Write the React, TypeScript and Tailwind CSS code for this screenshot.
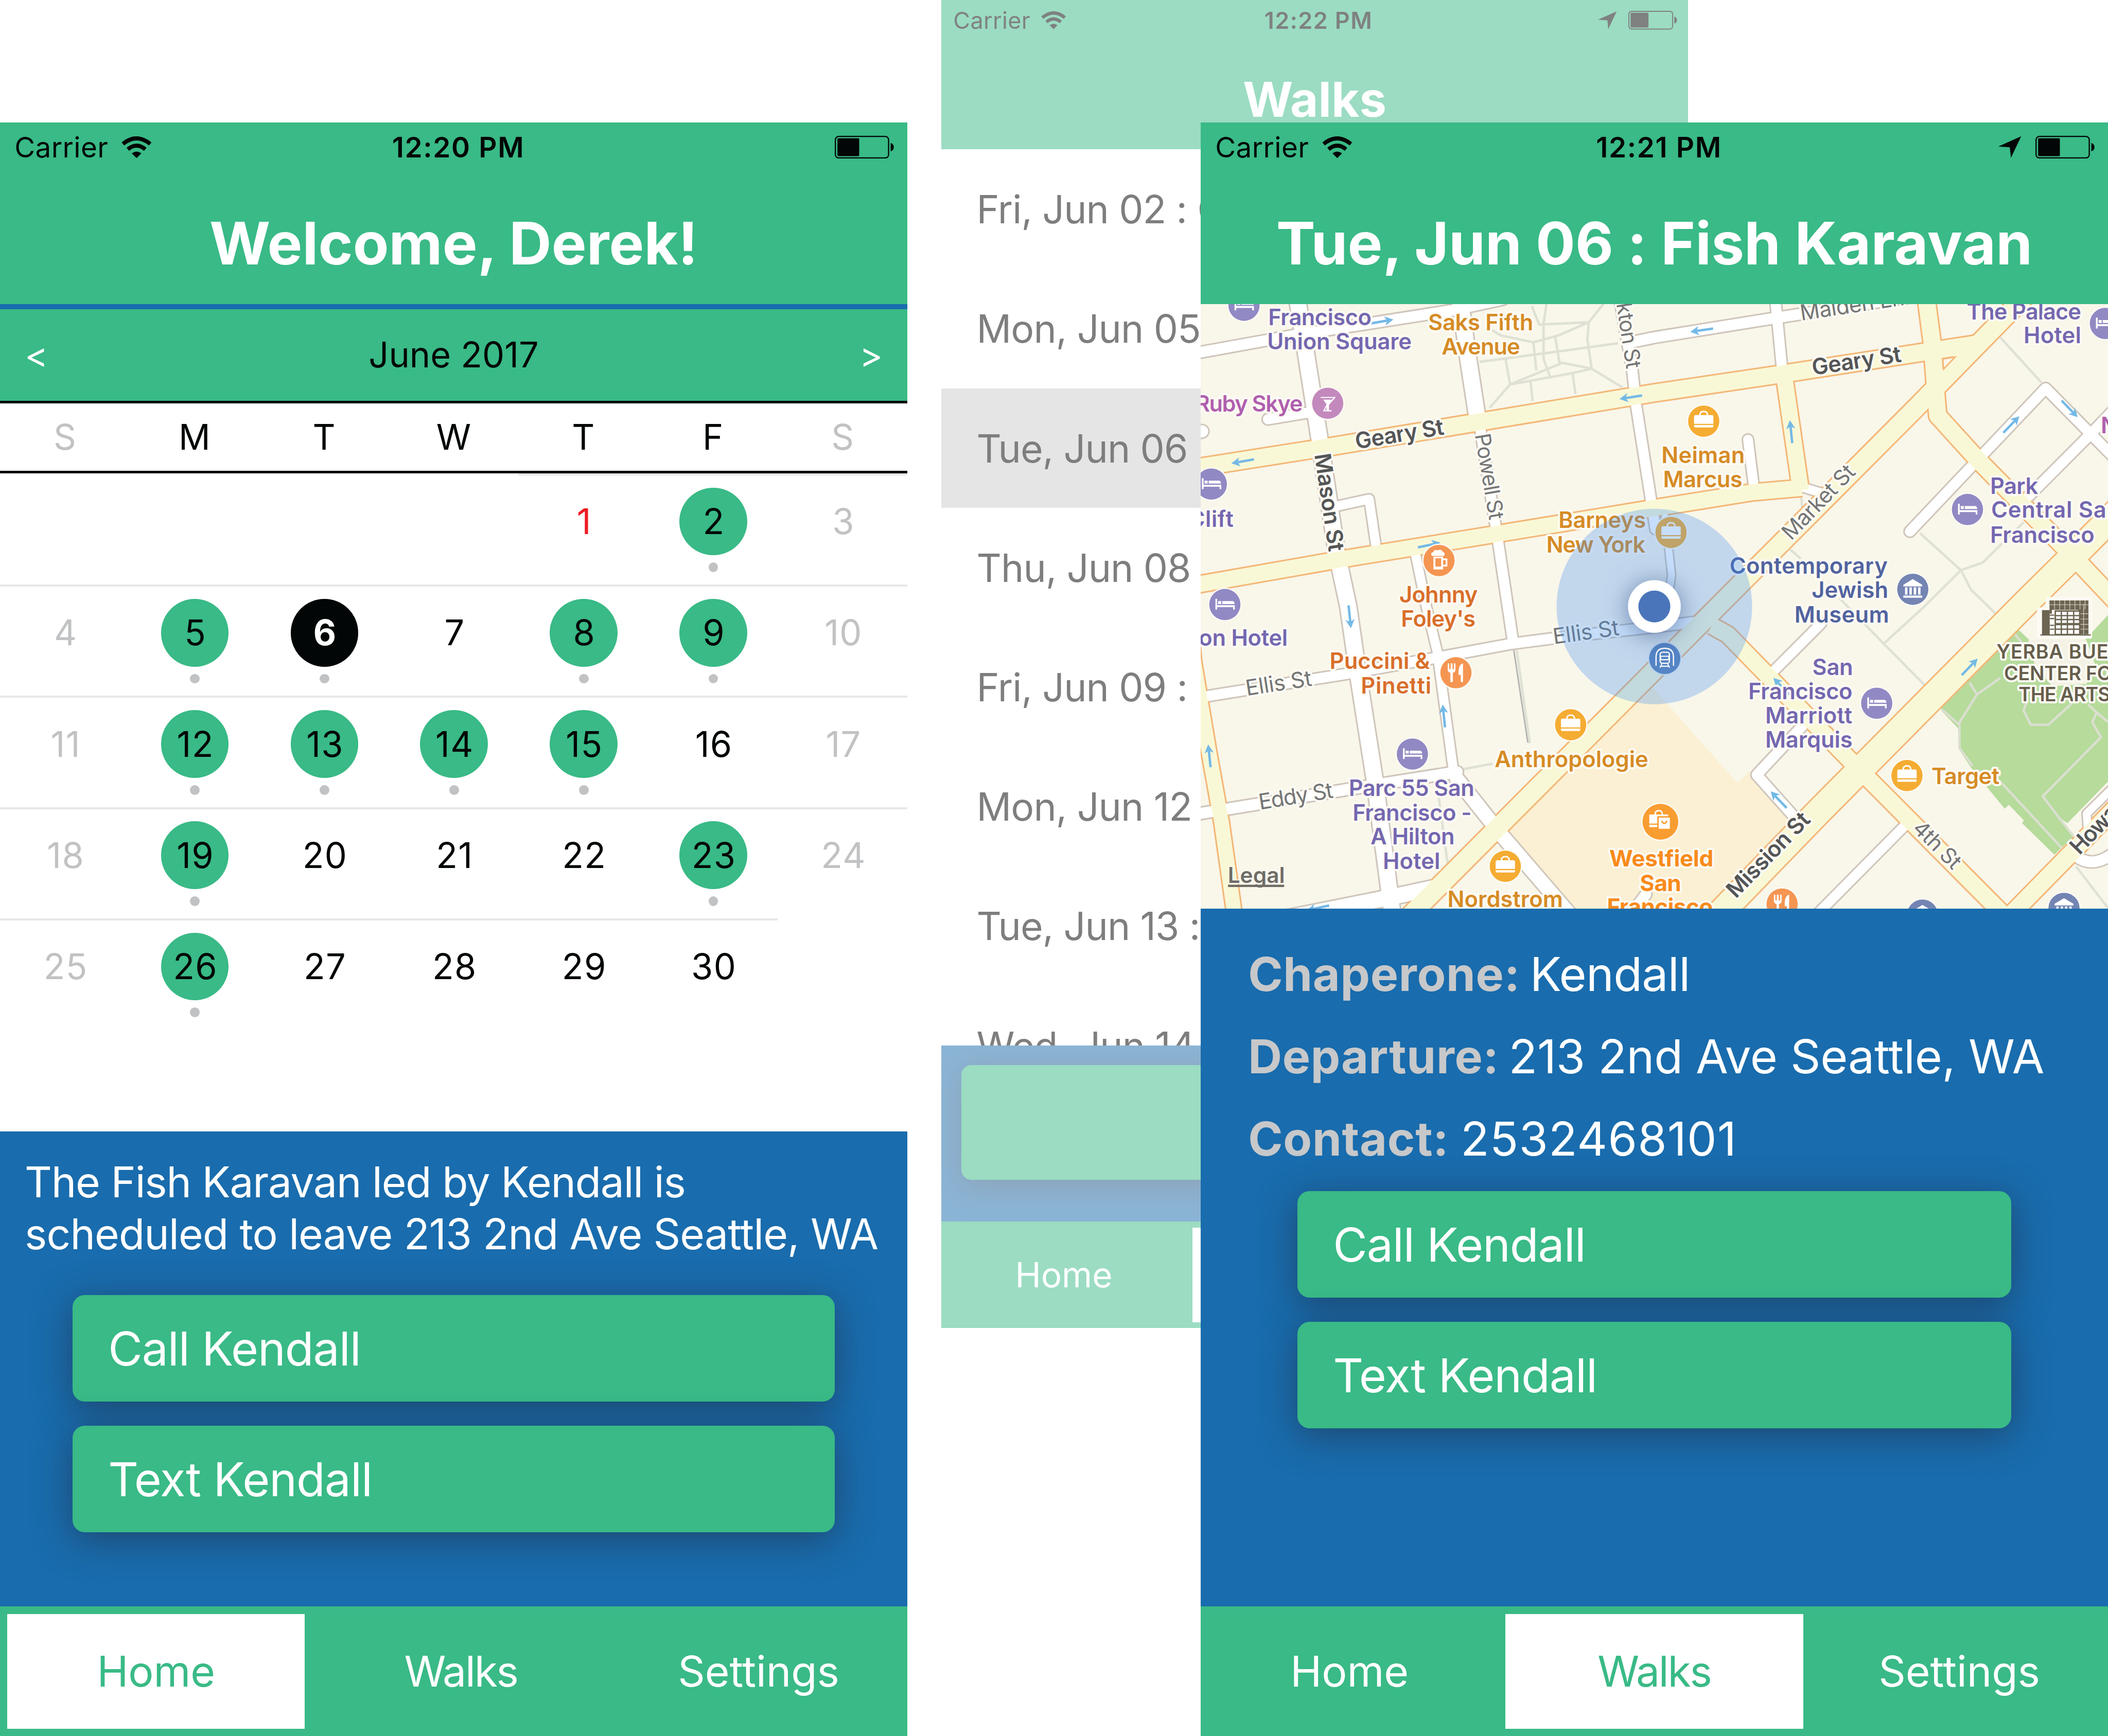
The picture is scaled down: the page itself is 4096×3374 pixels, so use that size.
import React from "react";
import type { ReactNode } from "react";

/* ---------- Status bar ---------- */

function WifiIcon() {
  return (
    <svg viewBox="0 0 12.5 9" className="h-[9px] w-[12.5px]" fill="none" stroke="currentColor" strokeWidth="1.65">
      <path d="M0.6 3.15 Q6.25 -1.5 11.9 3.15" />
      <path d="M2.65 5.35 Q6.25 2.35 9.85 5.35" />
      <path d="M6.25 9 L4.25 7 Q6.25 5.5 8.25 7 Z" fill="currentColor" stroke="none" />
    </svg>
  );
}

function LocationIcon() {
  return (
    <svg viewBox="0 0 9.4 8.9" className="mr-[5.9px] h-[8.9px] w-[9.4px]" fill="currentColor">
      <path d="M9.4 0 L0 4.2 L4.7 4.5 L5.2 8.9 Z" />
    </svg>
  );
}

function BatteryIcon() {
  return (
    <svg viewBox="0 0 24.5 9.4" className="h-[9.4px] w-[24.5px]" fill="none">
      <rect x="0.25" y="0.25" width="22" height="8.9" rx="1.4" stroke="currentColor" strokeWidth="0.5" />
      <rect x="1.1" y="1" width="9" height="7.4" rx="0.4" fill="currentColor" />
      <path d="M23.1 3 Q24.4 3.3 24.4 4.7 Q24.4 6.1 23.1 6.4 Z" fill="currentColor" />
    </svg>
  );
}

function StatusBar({ time, located }: { time: string; located?: boolean }) {
  return (
    <div className="grid h-5 grid-cols-3 items-center pt-[0.4px] text-[11.64px] text-[#020606]">
      <div className="flex items-center gap-[5.4px] pl-[6px] tracking-[0.007em]">
        Carrier
        <WifiIcon />
      </div>
      <div className="pl-[3.8px] text-center font-semibold tracking-[0.03em] whitespace-nowrap">{time}</div>
      <div className="flex items-center justify-end pr-[5.5px]">
        {located && <LocationIcon />}
        <BatteryIcon />
      </div>
    </div>
  );
}

function Header({ time, located, title }: { time: string; located?: boolean; title: string }) {
  return (
    <div className="h-[75px] shrink-0 bg-[#39ba86]">
      <StatusBar time={time} located={located} />
      <h1 className="flex h-[55px] items-center justify-center pt-[5.1px] text-[24.25px] font-bold tracking-[0.0005em] whitespace-nowrap text-white">
        {title}
      </h1>
    </div>
  );
}

/* ---------- Shared pieces ---------- */

const tabNames = ["Home", "Walks", "Settings"] as const;

function TabBar({ active }: { active: (typeof tabNames)[number] }) {
  return (
    <div className="flex h-[53.5px] shrink-0 bg-[#39ba86] text-[17.46px]">
      {tabNames.map((name) => (
        <div
          key={name}
          className={
            "flex flex-1 items-center justify-center " +
            (name === "Walks" ? "tracking-[-0.026em] " : "tracking-[-0.001em] ") +
            (name === active ? "m-[3px] bg-white text-[#39ba86]" : "text-white")
          }
        >
          {name}
        </div>
      ))}
    </div>
  );
}

function ActionButton({ children }: { children?: ReactNode }) {
  return (
    <div className="flex h-11 items-center rounded-[5px] bg-[#39ba86] pt-[0.3px] pl-[14.7px] text-[19.4px] tracking-[-0.012em] text-white shadow-[0_3px_15px_rgba(36,36,50,0.5)]">
      {children}
    </div>
  );
}

function Phone({ children }: { children: ReactNode }) {
  return (
    <div className="flex h-[667px] w-[375px] flex-col overflow-hidden bg-white font-['Inter',sans-serif]">{children}</div>
  );
}

/* ---------- Home screen ---------- */

const weekdays = ["S", "M", "T", "W", "T", "F", "S"];
const walkDays = [2, 5, 6, 8, 9, 12, 13, 14, 15, 19, 23, 26];
const today = 1;
const selectedDay = 6;
const firstColumn = 4;

function dayColor(day: number, column: number) {
  if (day === selectedDay) return "bg-[#020606] font-bold text-white";
  if (day === today) return "text-[#ed1c24]";
  if (walkDays.includes(day)) return "bg-[#39ba86] text-[#020606]";
  return column === 0 || column === 6 ? "text-[#c1c2c4]" : "text-[#020606]";
}

function DayCell({ day, column }: { day: number; column: number }) {
  return (
    <div className="flex h-[46px] flex-col items-center border-t border-[#e6e7e8] pt-[5.1px] pl-[0.3px]">
      <div
        className={
          "flex size-7 shrink-0 items-center justify-center rounded-full pl-[0.5px] text-[14.55px] tracking-[0.02em] " +
          dayColor(day, column)
        }
      >
        {day}
      </div>
      {walkDays.includes(day) && <div className="mt-[3px] size-1 rounded-full bg-[#c1c2c4]" />}
    </div>
  );
}

function Calendar() {
  const days = Array.from({ length: 30 }, (_, i) => i + 1);
  return (
    <div className="h-[342px] shrink-0">
      <div className="flex h-[40px] items-center justify-between border-t-[2.14px] border-[#196cad] bg-[#39ba86] px-[10.2px] text-[14.55px] text-white">
        <span>&lt;</span>
        <span className="text-[#020606]">June 2017</span>
        <span>&gt;</span>
      </div>
      <div className="grid h-[30px] grid-cols-7 items-center border-y-[1.07px] border-[#020606] text-center text-[14.55px] text-[#020606]">
        {weekdays.map((d, i) => (
          <span key={i} className={i === 0 || i === 6 ? "text-[#c1c2c4]" : undefined}>
            {d}
          </span>
        ))}
      </div>
      <div className="grid grid-cols-7">
        {Array.from({ length: firstColumn }, (_, i) => (
          <div key={"blank" + i} />
        ))}
        {days.map((day) => (
          <DayCell key={day} day={day} column={(day - 1 + firstColumn) % 7} />
        ))}
      </div>
    </div>
  );
}

function HomeScreen() {
  return (
    <Phone>
      <Header time="12:20 PM" title="Welcome, Derek!" />
      <Calendar />
      <div className="flex-1 bg-[#196cad] pt-[10.2px]">
        <p className="pl-[10.2px] text-[17.46px] leading-[21.5px] whitespace-nowrap text-white">
          <span className="tracking-[-0.0151em]">The Fish Karavan led by Kendall is</span>
          <br />
          <span className="tracking-[-0.0109em]">scheduled to leave 213 2nd Ave Seattle, WA</span>
        </p>
        <div className="mt-[14.6px] flex flex-col gap-2.5 px-[30px]">
          <ActionButton>Call Kendall</ActionButton>
          <ActionButton>Text Kendall</ActionButton>
        </div>
      </div>
      <TabBar active="Home" />
    </Phone>
  );
}

/* ---------- Walk list screen ---------- */

const walks = [
  "Fri, Jun 02 : C",
  "Mon, Jun 05",
  "Tue, Jun 06",
  "Thu, Jun 08",
  "Fri, Jun 09 :",
  "Mon, Jun 12",
  "Tue, Jun 13 :",
  "Wed, Jun 14",
];

function WalksScreen() {
  return (
    <Phone>
      <Header time="12:22 PM" located title="Walks" />
      <div className="h-[450px] shrink-0 overflow-hidden">
        {walks.map((walk, i) => (
          <div
            key={walk}
            className={
              "flex h-[60px] items-center pt-[0.6px] pl-[17.7px] text-[19.4px] tracking-[-0.0125em] whitespace-nowrap text-black " +
              (i === 2 ? "bg-[#cdcdcd]" : "")
            }
          >
            {walk}
          </div>
        ))}
      </div>
      <div className="flex-1 overflow-hidden bg-[#196cad] p-2.5">
        <div className="h-[57.4px] rounded-[5px] bg-[#39ba86] shadow-[0_3px_15px_rgba(36,36,50,0.5)]" />
      </div>
      <TabBar active="Walks" />
    </Phone>
  );
}

/* ---------- Map ---------- */

const tone = {
  hotel: "#7467b0",
  shop: "#d68b25",
  food: "#d96e2a",
  club: "#b05fae",
  museum: "#51639f",
  mall: "#f98b1c",
  arts: "#665e4c",
};

const whiteRoads: { d: string; w: number }[] = [
  { d: "M-4 20.6 L0 19.9 L38 13 L104.4 2.5 L125 -2", w: 5 },
  { d: "M177.8 15.8 L187 13.9 L235.2 6.1 L294 -3", w: 5 },
  { d: "M39.8 -3 L43.9 22.7 L49 55 L56.2 102.7 L61 125 L65.2 154 L71.9 196.6 L79.5 254", w: 7.2 },
  { d: "M107 -3 L110.6 22.7 L114.2 46", w: 7.2 },
  { d: "M115 48 L123.1 99.5 L129 139", w: 4.8 },
  { d: "M173 -3 L178.4 27.5 L180 42.1 L188 93", w: 4.8 },
  { d: "M237.4 -3 L240.3 27", w: 4.8 },
  { d: "M226.2 56 L228.8 77", w: 4.6 },
  { d: "M27.8 47.6 L47 44.4", w: 4.8 },
  { d: "M-4 53.4 L0.6 52.6", w: 5.6 },
  { d: "M55 83.8 L69.6 80.6 L72.6 101", w: 4.4 },
  { d: "M88.5 102 L93 124 L97.7 143.4 L104.6 194 L107 198.5 L124.6 219.8 L156 256", w: 4.4 },
  { d: "M106 196.4 L124.6 219.8 L154 254", w: 6.4 },
  { d: "M3 162 L62 152.6 L98.4 146 L128.5 140.4 L150 137.6 L187 133.6 L206 131.2", w: 4.8 },
  { d: "M-4 211.2 L70.7 199 L106 193.4", w: 5.2 },
  { d: "M34.5 254 L78.5 245.2 L96 241.4", w: 7 },
  { d: "M192 88 L194.6 112 L192 131", w: 3.4 },
  { d: "M293.1 94 L349.2 34.8 L380 66", w: 4.8 },
  { d: "M380 41 L368.5 53 L342 79.6", w: 4.8 },
  { d: "M256.4 132 L236 152.5", w: 4.6 },
  { d: "M250 173 L229.8 194.6 L248 215", w: 4.8 },
  { d: "M291.6 215 L254 253", w: 4.6 },
  { d: "M380 197 L366.2 210.6 L366.8 221", w: 3.8 },
  { d: "M362 228.4 Q369 233.6 378 226.4", w: 5 },
  { d: "M249 75.8 L257 78.2", w: 4.2 },
  { d: "M178 252 L184 244", w: 5 },
];

const yellowRoads: { d: string; w: number }[] = [
  { d: "M-4 68 L55.6 58.6 L187 36.8 L237.6 29.3 L298 20 L320 16.6", w: 7.6 },
  { d: "M-4 116.6 L0 115.7 L58.6 105.4 L123.6 94.8 L188.8 84.1 L228 77.8 L248.4 76", w: 7.2 },
  { d: "M241.2 30 L248 77", w: 7.2 },
  { d: "M299.8 -3 L302.3 16 L303.6 34 L304.6 46.1 L321.1 64.3 L360.6 104.3 L382 127", w: 7.6 },
  { d: "M340.5 -3 L295.6 42.9 L234.3 104.4 L85 254.3", w: 8.2 },
  { d: "M384 80.6 L360.4 104.3 L340.7 123.8 L255.5 209.7 L212.3 254.3", w: 11.2 },
  { d: "M211.2 133 L217.8 136.6 L269 189.2 L334 254.6", w: 7.4 },
  { d: "M333 254.3 L384 202.2", w: 7.6 },
  { d: "M-8 92 L-2.8 148 L3.4 185 L8.6 214 L14.2 254", w: 6.6 },
];

const footpaths =
  "M136.9 0.9 L139.9 8.5 L160.4 7.5 L166.4 0 M142.9 0 L141.7 8.1 L141.7 22.7 L144.7 30.8 M160.4 7.5 L159.8 14.6 L161.6 26.7 L174.2 34.4 M160.4 7.5 L147.7 13 L137.5 15.8 L124.2 13 L120 10.6 M115.2 23.9 L147.7 19.6 L172.4 16.2 M126 22.7 L127.9 33.2 L119.4 42.9 M127.9 33.2 L149.5 24.3 L161.6 26.7 L153.7 28.5 L127.9 33.2 M136.3 32 L137.2 40.1 M153.7 28.5 L154.9 37.2 M146.5 13.4 L148.3 24.3 M137.5 15.8 L138.7 27.5 M330.5 13.8 L347.4 32.4 M297.3 94.7 L314.2 110 L318.4 118.1 L329.3 128.7 M314.2 110 L323.3 106.8 L340.1 90.2 M314.2 110 L299.1 125 L282.3 140.4 M264 121.6 L282.3 140.4 L299.1 157.4 M243.7 101.5 L248 105.2 M130.6 143 L136 181.5 M107.4 192.5 L120.6 190 M98.4 203.9 L102 230.9 M361.8 232.5 L376 251 M248 77 L248.6 84";

const parkPaths =
  "M317.8 156.5 L320.8 161.4 L313.6 172.9 L313.6 183.5 L319 190.9 M320.8 161.4 L330.5 154.5 M341.3 164.7 L340.1 168 L343.1 173.9 L350.4 173.9 L360 165.1 M366.7 165.5 L370.3 168.8 L368.5 172.9 L372.1 179 L348 203.5 L360.6 219.9 M370.3 168.8 L376 173.6 M330.5 197.4 L355.8 224.8 M306.4 167.6 L313.6 174 M336.6 136.6 L343.5 145";

const arrows: [number, number, number][] = [
  [74.9, 7.2, -10],
  [17.4, 65, 170],
  [177.8, 38.5, 171],
  [94.4, 99.6, -12],
  [61.6, 129.2, 84],
  [100.5, 170.3, -96],
  [3.6, 186.8, -96],
  [48.5, 249.6, 168],
  [207.1, 10.8, 172],
  [244, 52.8, -96],
  [335, 49.8, -46],
  [359.1, 43.3, 46],
  [317.8, 150, -46],
  [238.9, 204.9, -134],
  [240, 158, -134],
];

function Arrow({ x, y, angle }: { x: number; y: number; angle: number }) {
  return (
    <g transform={`translate(${x} ${y}) rotate(${angle})`} stroke="#74b9e6" strokeWidth="1" fill="none">
      <path d="M-4.7 0 H3.4" />
      <path d="M4.8 0 L1.2 -1.9 L2.2 0 L1.2 1.9 Z" fill="#74b9e6" stroke="none" />
    </g>
  );
}

type PoiKind = "hotel" | "bag" | "fork" | "beer" | "martini" | "museum" | "mall" | "transit";

const poiColor: Record<PoiKind, string> = {
  hotel: "#9189c3",
  bag: "#f5ac32",
  fork: "#f59552",
  beer: "#f59552",
  martini: "#c389bd",
  museum: "#7484b3",
  mall: "#f99d31",
  transit: "#5585c5",
};

function PoiGlyph({ kind }: { kind: PoiKind }) {
  switch (kind) {
    case "hotel":
      return (
        <path
          d="M-3.9 -2.4 h0.7 v2.7 h7.3 v1.8 h-0.7 v-1 h-6.6 v1 h-0.7 z M-2.8 -1.4 h1.3 v1.2 h-1.3 z M-1.1 -1.4 h4.2 q0.9 0 0.9 1.2 h-5.1 z"
          fill="#fff"
        />
      );
    case "bag":
      return (
        <g fill="#fff">
          <path d="M-4 -1.9 q0 -0.6 0.6 -0.6 h6.8 q0.6 0 0.6 0.6 v3 h-8 z" />
          <path d="M-4 1.6 h8 v0.4 q0 0.6 -0.6 0.6 h-6.8 q-0.6 0 -0.6 -0.6 z" />
          <path d="M-1.6 -2.4 q0 -1.6 1.6 -1.6 q1.6 0 1.6 1.6" fill="none" stroke="#fff" strokeWidth="0.6" />
        </g>
      );
    case "fork":
      return (
        <g fill="#fff">
          <path d="M-3.4 -3.9 h0.6 v2.4 h0.6 v-2.4 h0.8 v2.4 h0.6 v-2.4 h0.6 v2.6 q0 1 -1.1 1.3 v3.8 h-1 v-3.8 q-1.1 -0.3 -1.1 -1.3 z" />
          <path d="M2.9 -3.9 v7.7 h-0.9 v-2.9 h-0.9 q-0.3 -4.2 1.8 -4.8 z" />
        </g>
      );
    case "beer":
      return (
        <g>
          <path d="M-2.9 -1.9 q-0.9 -1.2 0.5 -1.6 q0.4 -1.2 1.8 -0.7 q1.6 -0.7 2.1 0.6 q1.4 0.4 0.5 1.7 z" fill="#fff" />
          <rect x="-2.3" y="-1.6" width="4" height="5.3" fill="#fff" />
          <rect x="-1.5" y="-0.9" width="2.4" height="3.4" fill="#f59552" />
          <path d="M1.7 -0.5 h1.4 v2.6 h-1.4" fill="none" stroke="#fff" strokeWidth="0.7" />
        </g>
      );
    case "martini":
      return (
        <g fill="none" stroke="#fff" strokeWidth="0.45">
          <path d="M-2.9 -2.4 H2.9 L0.3 0.6 V3.1 H1.6 M-1.6 3.1 H-0.3 V0.6 Z" />
          <path d="M-1.9 -1.5 H1.9 L0.4 0.5 V3.3 H-0.4 V0.5 Z" fill="#fff" stroke="none" />
        </g>
      );
    case "museum":
      return (
        <g fill="#fff">
          <path d="M0 -4.2 L3.9 -1.9 v0.7 h-7.8 v-0.7 z" />
          <path d="M-3.2 -0.8 h1 v3 h-1 z M-1.4 -0.8 h1 v3 h-1 z M0.4 -0.8 h1 v3 h-1 z M2.2 -0.8 h1 v3 h-1 z M-3.9 2.6 h7.8 v0.9 h-7.8 z" />
        </g>
      );
    case "mall":
      return (
        <g fill="#fff">
          <path d="M-4.6 -3 h7.8 v5.2 h-7.8 z" />
          <path d="M-2.2 -3 q0 -1.6 1.5 -1.6 q1.5 0 1.5 1.6" fill="none" stroke="#fff" strokeWidth="0.6" />
          <path d="M-4.6 1 h4" stroke="#f99d31" strokeWidth="0.5" />
          <rect x="-1" y="-2" width="5.2" height="5.2" stroke="#f99d31" strokeWidth="0.6" />
          <path d="M0.5 -0.4 q1.1 2.2 2.2 0" fill="none" stroke="#f99d31" strokeWidth="0.6" />
        </g>
      );
    case "transit":
      return (
        <g fill="none" stroke="#fff">
          <path d="M-3.6 3 V-0.6 Q-3.6 -4.2 0 -4.2 Q3.6 -4.2 3.6 -0.6 V3" strokeWidth="0.5" />
          <rect x="-1.9" y="-2.6" width="3.8" height="4.6" rx="0.9" strokeWidth="0.5" />
          <path d="M-1.7 -0.9 h3.4 v1.4 h-3.4 z" strokeWidth="0.45" />
          <path d="M-1.2 2.2 L-2 3.8 M1.2 2.2 L2 3.8 M-1.6 3.2 h3.2" strokeWidth="0.45" />
        </g>
      );
  }
}

function Poi({ kind, x, y }: { kind: PoiKind; x: number; y: number }) {
  return (
    <g transform={`translate(${x} ${y})`}>
      <circle r={kind === "mall" ? 7.9 : 7} fill={kind === "transit" ? "#b9d2ee" : "#fdfcf6"} />
      <circle r={kind === "mall" ? 7.4 : 6.45} fill={poiColor[kind]} />
      <PoiGlyph kind={kind} />
    </g>
  );
}

const pois: [PoiKind, number, number][] = [
  ["hotel", 17.9, 0.5],
  ["martini", 52.5, 41],
  ["hotel", 4.4, 74.4],
  ["hotel", 10, 124.2],
  ["beer", 98.5, 106],
  ["fork", 105.5, 152.4],
  ["hotel", 87.5, 186],
  ["bag", 152.9, 173.9],
  ["bag", 125.9, 232.4],
  ["bag", 207.9, 48.4],
  ["bag", 194.4, 94.4],
  ["museum", 294.3, 117.9],
  ["hotel", 316.9, 84.9],
  ["hotel", 373.9, 8],
  ["hotel", 279.4, 165],
  ["bag", 291.9, 194.9],
  ["mall", 190, 214],
  ["fork", 240.3, 248],
  ["museum", 298.3, 252.6],
  ["museum", 356.8, 249.8],
];

interface Label {
  t: string;
  x: number;
  y: number;
  w: number;
  c: string;
  a?: number;
  s?: number;
  b?: number;
}

const labels: Label[] = [
  { t: "Francisco", x: 27.9, y: 8.8, w: 42.7, c: tone.hotel },
  { t: "Union Square", x: 27.5, y: 18.65, w: 59.7, c: tone.hotel },
  { t: "Ruby Skye", x: -2.2, y: 44.4, w: 44.4, c: tone.club },
  { t: "Clift", x: -5, y: 92, w: 18.6, c: tone.hotel },
  { t: "Saks Fifth", x: 94, y: 10.8, w: 43.5, c: tone.shop },
  { t: "Avenue", x: 99.6, y: 20.8, w: 32.4, c: tone.shop },
  { t: "Barneys", x: 147.9, y: 92.6, w: 36.1, c: tone.shop },
  { t: "New York", x: 142.9, y: 102.7, w: 40.9, c: tone.shop },
  { t: "Johnny", x: 82.1, y: 123.4, w: 32.4, c: tone.food },
  { t: "Foley's", x: 82.8, y: 133.4, w: 30.8, c: tone.food },
  { t: "on Hotel", x: -0.8, y: 141.2, w: 36.8, c: tone.hotel },
  { t: "Puccini &", x: 53.3, y: 150.8, w: 41.4, c: tone.food },
  { t: "Pinetti", x: 66.2, y: 161, w: 29.1, c: tone.food },
  { t: "Parc 55 San", x: 61.2, y: 203.4, w: 51.9, c: tone.hotel },
  { t: "Francisco -", x: 62.8, y: 213.5, w: 49.2, c: tone.hotel },
  { t: "A Hilton", x: 70.2, y: 223.4, w: 34.8, c: tone.hotel },
  { t: "Hotel", x: 75.3, y: 233.5, w: 23.7, c: tone.hotel },
  { t: "Anthropologie", x: 121.5, y: 191.4, w: 63.5, c: tone.shop },
  { t: "Nordstrom", x: 102, y: 249.3, w: 47.7, c: tone.shop },
  { t: "Westfield", x: 168.9, y: 232.5, w: 43, c: tone.mall, b: 700, s: 9.4 },
  { t: "San", x: 181.5, y: 242.6, w: 17.1, c: tone.mall, b: 700, s: 9.4 },
  { t: "Francisco", x: 167.9, y: 252.5, w: 43.8, c: tone.mall, b: 700, s: 9.4 },
  { t: "Neiman", x: 190.4, y: 65.8, w: 34.5, c: tone.shop },
  { t: "Marcus", x: 191.1, y: 75.8, w: 32.8, c: tone.shop },
  { t: "The Palace", x: 316.6, y: 6.3, w: 47.3, c: tone.hotel },
  { t: "Hotel", x: 340.1, y: 16.2, w: 23.8, c: tone.hotel },
  { t: "Park", x: 326.3, y: 78.5, w: 19.8, c: tone.hotel },
  { t: "Central San", x: 326.7, y: 88.3, w: 53.4, c: tone.hotel },
  { t: "Francisco", x: 326.3, y: 98.7, w: 43.1, c: tone.hotel },
  { t: "N", x: 372, y: 53.4, w: 6.9, c: tone.club },
  { t: "Contemporary", x: 218.6, y: 111.4, w: 65.3, c: tone.museum },
  { t: "Jewish", x: 252.5, y: 121.5, w: 31.7, c: tone.museum },
  { t: "Museum", x: 245.4, y: 131.6, w: 39.1, c: tone.museum },
  { t: "San", x: 252.8, y: 153.3, w: 16.8, c: tone.hotel },
  { t: "Francisco", x: 226.3, y: 163.3, w: 43.1, c: tone.hotel },
  { t: "Marriott", x: 233.3, y: 173.3, w: 36, c: tone.hotel },
  { t: "Marquis", x: 233.3, y: 183.3, w: 36.1, c: tone.hotel },
  { t: "Target", x: 302, y: 198.4, w: 28.1, c: tone.shop },
  { t: "YERBA BUENA", x: 328.9, y: 146.5, w: 58.4, c: tone.arts, s: 8 },
  { t: "CENTER FOR", x: 332, y: 155.5, w: 49.8, c: tone.arts, s: 8 },
  { t: "THE ARTS", x: 338, y: 164.3, w: 38, c: tone.arts, s: 8 },
  { t: "Geary St", x: 64.4, y: 60, w: 37, a: -9.6, c: "#545556" },
  { t: "Geary St", x: 253.1, y: 29.4, w: 37.2, a: -8.6, c: "#545556" },
  { t: "Mason St", x: 47, y: 62.2, w: 40.8, a: 81.6, c: "#545556" },
  { t: "Powell St", x: 113.3, y: 54, w: 36, a: 80.4, c: "#747576", b: 400, s: 8.8 },
  { t: "Stockton St", x: 169.1, y: -17.5, w: 45, a: 81.2, c: "#747576", b: 400, s: 8.8 },
  { t: "Ellis St", x: 19.1, y: 161.9, w: 27.5, a: -8.8, c: "#747576", b: 400, s: 9 },
  { t: "Ellis St", x: 146, y: 140.6, w: 27.5, a: -8, c: "#747576", b: 400, s: 9 },
  { t: "Eddy St", x: 24.5, y: 209, w: 31, a: -9.3, c: "#747576", b: 400, s: 9 },
  { t: "Maiden Ln", x: 248.2, y: 6.8, w: 43.4, a: -8.6, c: "#747576", b: 400, s: 9 },
  { t: "Market St", x: 244, y: 98, w: 39, a: -46, c: "#747576", b: 400, s: 9 },
  { t: "Mission St", x: 221.2, y: 246, w: 45, a: -46, c: "#545556" },
  { t: "4th St", x: 293.8, y: 217.2, w: 24, a: 45, c: "#747576", b: 400, s: 8.9 },
  { t: "Howard St", x: 363.2, y: 228, w: 42.4, a: -46, c: "#545556" },
];

function MapLabel({ t, x, y, w, c, a = 0, s = 9.25, b = 600 }: Label) {
  return (
    <text
      transform={`translate(${x} ${y}) rotate(${a})`}
      textLength={w}
      lengthAdjust="spacing"
      fontSize={s}
      fontWeight={b}
      fill={c}
      stroke="#fdfbf4"
      strokeWidth="1.7"
      strokeLinejoin="round"
      className="[paint-order:stroke]"
    >
      {t}
    </text>
  );
}

function ArtsCenter() {
  const cols = [0, 1, 2, 3, 4, 5, 6];
  return (
    <g>
      <path
        d="M346.4 137.5 V126.2 H350 V121.9 H367.6 V137.5 Z"
        fill="#fdfbf4"
        stroke="#fdfbf4"
        strokeWidth="1.6"
        strokeLinejoin="round"
      />
      <path d="M350.8 122.5 H366.9 V136.5 H362.7 V126.4 H351.8 V128 H350.8 Z" fill="#6d6552" />
      {cols.map((i) => (
        <path key={i} d={`M${352.9 + i * 2.1} 122.5 V126.2`} stroke="#c9c5b8" strokeWidth="0.3" />
      ))}
      <path
        d="M350.8 124.3 H366.9 M364.9 124 V136.5 M363 128 H367 M363 130.2 H367 M363 132.4 H367 M363 134.4 H367"
        stroke="#c9c5b8"
        strokeWidth="0.3"
      />
      <rect x="347.7" y="126.5" width="3.2" height="10.1" fill="#6d6552" />
      <path d="M351 128.6 H352.8 M351 130 H352.8 M351 132.8 H352.8 M351 134.4 H352.8" stroke="#6d6552" strokeWidth="0.5" />
      <rect x="353.2" y="126.9" width="10.1" height="9.7" fill="#fff" stroke="#6d6552" strokeWidth="0.6" />
      <path
        d="M355.7 127 V136.5 M358.2 127 V136.5 M360.8 127 V136.5 M353.2 128.8 H363.3 M353.2 130.4 H363.3 M353.2 134.4 H363.3"
        stroke="#6d6552"
        strokeWidth="0.55"
      />
      <path d="M353.2 132.3 H363.3" stroke="#6d6552" strokeWidth="1" />
      <path d="M347 136.8 H367.9" stroke="#6d6552" strokeWidth="0.5" />
    </g>
  );
}

function WalkMap() {
  return (
    <svg viewBox="0 0 375 250" className="h-[250px] w-[375px] shrink-0 bg-[#f9f6ea]">
      <path
        d="M187.2 159 L222 198.2 L226.6 193.2 L245 212 L208 254 L155 254 L125 218 L176 163 Z"
        fill="#fbf0d3"
      />
      <path
        d="M338.3 134.9 L343.7 140 L364.2 140.2 L375 128.5 L375 197.4 L358.2 214.6 L353.4 211.3 L360.6 220.3 L352.8 227.6 L339.5 214.6 L340.2 213.4 L334 207 L332.3 208.6 L318.4 191.7 L313.6 184.3 L313 175.3 L306.4 168.4 L304 160 L330 130 Z"
        fill="#b6db9b"
      />
      <path d="M342 138.8 L366 138.8 L370 150 L366 157 L352 158 L345 150 Z" fill="#f4f2e4" />
      <g fill="none" strokeLinejoin="round">
        <path d={footpaths} stroke="#dfe1d5" strokeWidth="1" />
        <path d={parkPaths} stroke="#dbdfd0" strokeWidth="1" />
        <path d="M129.4 143 L135.2 181.3" stroke="#b3b3b1" strokeWidth="0.6" />
      </g>
      <g fill="none" strokeLinecap="round" strokeLinejoin="round">
        {whiteRoads.map((r) => (
          <path key={r.d} d={r.d} stroke="#cfc5bb" strokeWidth={r.w + 0.7} />
        ))}
      </g>
      <g fill="none" strokeLinejoin="round">
        {yellowRoads.map((r) => (
          <path key={r.d} d={r.d} stroke="#f4b677" strokeWidth={r.w + 0.7} />
        ))}
      </g>
      <g fill="none" stroke="#fff" strokeLinecap="round" strokeLinejoin="round">
        {whiteRoads.map((r) => (
          <path key={r.d} d={r.d} strokeWidth={r.w - 0.6} />
        ))}
      </g>
      <g fill="none" stroke="#f9f8d6" strokeLinejoin="round">
        {yellowRoads.map((r) => (
          <path key={r.d} d={r.d} strokeWidth={r.w - 0.6} />
        ))}
      </g>
      <path d="M306.7 22.7 L311.8 21.9 L307 26.9 Z" fill="#f9f6ea" stroke="#f4b677" strokeWidth="0.6" />
      {arrows.map(([x, y, angle]) => (
        <Arrow key={`${x},${y}`} x={x} y={y} angle={angle} />
      ))}
      {labels.map((label) => (
        <MapLabel key={`${label.t}${label.x}`} {...label} />
      ))}
      {pois.map(([kind, x, y]) => (
        <Poi key={`${x},${y}`} kind={kind} x={x} y={y} />
      ))}
      <ArtsCenter />
      <text
        x="11.2"
        y="239.3"
        textLength="23.6"
        fontSize="9"
        fontWeight="600"
        fill="#6f6c66"
        stroke="#fdfbf4"
        strokeWidth="0.8"
        className="[paint-order:stroke]"
      >
        Legal
      </text>
      <path d="M11.3 240.5 H34.5" stroke="#6f6c66" strokeWidth="1" />
      <circle cx="187.5" cy="125" r="40.4" fill="#3a8cf0" fillOpacity="0.29" />
      <Poi kind="transit" x={191.8} y={146.5} />
      <circle cx="187.5" cy="125" r="10.9" fill="#fff" className="drop-shadow-[0_1px_5px_rgba(30,60,120,0.55)]" />
      <circle cx="187.5" cy="125" r="6.6" fill="#4a75ba" />
    </svg>
  );
}

/* ---------- Walk detail screen ---------- */

function Detail({ label, children }: { label: string; children: ReactNode }) {
  return (
    <div className="flex h-6 items-center gap-[4px] text-[19.4px] whitespace-nowrap">
      <span className="font-bold tracking-[0.008em] text-[#c7c8ca]">{label}</span>
      {children}
    </div>
  );
}

function WalkDetailScreen() {
  return (
    <Phone>
      <Header time="12:21 PM" located title="Tue, Jun 06 : Fish Karavan" />
      <WalkMap />
      <div className="flex-1 bg-[#196cad] pt-[15.1px] text-white">
        <div className="flex flex-col gap-2.5 pl-[19.6px]">
          <Detail label="Chaperone:">
            <span className="tracking-[-0.008em]">Kendall</span>
          </Detail>
          <Detail label="Departure:">
            <span className="tracking-[-0.003em]">213 2nd Ave Seattle, WA</span>
          </Detail>
          <Detail label="Contact:">
            <span className="pl-[0.8px] tracking-[0.013em]">2532468101</span>
          </Detail>
        </div>
        <div className="mt-[9.7px] flex flex-col gap-2.5 px-10">
          <ActionButton>Call Kendall</ActionButton>
          <ActionButton>Text Kendall</ActionButton>
        </div>
      </div>
      <TabBar active="Walks" />
    </Phone>
  );
}

export default function App() {
  return (
    <div className="flex h-[3374px] w-[4096px] items-start overflow-hidden bg-white">
      <div className="mt-[238px] h-[3136px] w-[1763px] shrink-0">
        <div className="[zoom:4.7016]">
          <HomeScreen />
        </div>
      </div>
      <div className="ml-[66px] w-[1451px] shrink-0 opacity-50">
        <div className="[zoom:3.87]">
          <WalksScreen />
        </div>
      </div>
      <div className="relative z-10 mt-[238px] -ml-[947px] h-[3136px] w-[1763px] shrink-0">
        <div className="[zoom:4.7016]">
          <WalkDetailScreen />
        </div>
      </div>
    </div>
  );
}
